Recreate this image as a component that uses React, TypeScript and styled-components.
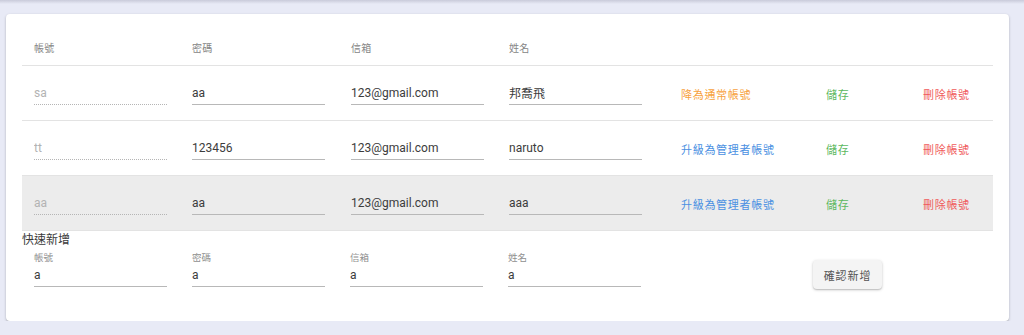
import React from 'react'
import styled, { createGlobalStyle } from 'styled-components'

const GlobalStyle = createGlobalStyle`
  html, body {
    margin: 0;
    padding: 0;
    background: #e8eaf6;
    font-family: Roboto, "Noto Sans CJK TC", sans-serif;
  }
`

const TopShade = styled.div`
  height: 4px;
  background: linear-gradient(rgba(60, 60, 90, 0.18), rgba(60, 60, 90, 0));
`

const Card = styled.div`
  width: 1003px;
  margin: 10px 0 0 6px;
  box-sizing: border-box;
  padding: 16px;
  background: #fff;
  border-radius: 4px;
  box-shadow: 0 1px 3px rgba(0, 0, 0, 0.2), 0 1px 1px rgba(0, 0, 0, 0.12);
`

const columns = '158px 159px 158px 172px 145px 97px 1fr'

const HeadRow = styled.div`
  display: grid;
  grid-template-columns: ${columns};
  height: 36px;
  box-sizing: border-box;
  align-items: center;
  border-bottom: 1px solid #e3e3e3;
`

const HeadCell = styled.div`
  padding-left: 12px;
  font-size: 10px;
  color: #858585;
  letter-spacing: 0.3px;
`

const Row = styled.div<{ $shade?: boolean }>`
  display: grid;
  grid-template-columns: ${columns};
  height: 55px;
  box-sizing: border-box;
  align-items: center;
  border-bottom: 1px solid #e3e3e3;
  background: ${p => (p.$shade ? '#ececec' : 'transparent')};
`

const Cell = styled.div`
  padding-left: 12px;
`

const Input = styled.input<{ $locked?: boolean }>`
  display: block;
  width: 133px;
  height: 22px;
  box-sizing: content-box;
  padding: 0;
  margin: 0;
  border: none;
  border-bottom: 1px ${p => (p.$locked ? 'dotted #b5b5b5' : 'solid #b8b8b8')};
  background: transparent;
  font-family: Roboto, "Noto Sans CJK TC", sans-serif;
  font-size: 12px;
  color: ${p => (p.$locked ? '#b3b3b3' : '#3c3c3c')};
  outline: none;
`

const Action = styled.span<{ $color: string }>`
  font-size: 11px;
  letter-spacing: 0.7px;
  color: ${p => p.$color};
  cursor: pointer;
`

const QuickTitle = styled.div`
  height: 18px;
  line-height: 18px;
  font-size: 12px;
  color: #3a3a3a;
`

const QuickRow = styled.div`
  display: flex;
  align-items: flex-start;
  gap: 25px;
  margin-top: 3px;
  padding: 0 0 16px 12px;
`

const Field = styled.div`
  display: flex;
  flex-direction: column;
`

const FieldLabel = styled.label`
  height: 12px;
  line-height: 12px;
  font-size: 9.5px;
  color: #8f8f8f;
`

const Button = styled.button`
  margin: 8px 0 0 147px;
  height: 29px;
  width: 69px;
  padding: 0;
  border: none;
  border-radius: 4px;
  background: #f4f4f4;
  box-shadow: 0 1px 3px rgba(0, 0, 0, 0.22), 0 1px 1px rgba(0, 0, 0, 0.1);
  font-family: Roboto, "Noto Sans CJK TC", sans-serif;
  font-size: 11px;
  letter-spacing: 0.9px;
  color: #555;
  cursor: pointer;
`

const users = [
  { account: 'sa', password: 'aa', email: '123@gmail.com', name: '邦喬飛', admin: true },
  { account: 'tt', password: '123456', email: '123@gmail.com', name: 'naruto', admin: false },
  { account: 'aa', password: 'aa', email: '123@gmail.com', name: 'aaa', admin: false },
]

const headers = ['帳號', '密碼', '信箱', '姓名']

export default function App() {
  return (
    <>
      <GlobalStyle />
      <TopShade />
      <Card>
        <HeadRow>
          {headers.map(h => <HeadCell key={h}>{h}</HeadCell>)}
        </HeadRow>
        {users.map((u, i) => (
          <Row key={u.account} $shade={i === 2}>
            <Cell><Input $locked readOnly defaultValue={u.account} /></Cell>
            <Cell><Input defaultValue={u.password} /></Cell>
            <Cell><Input defaultValue={u.email} /></Cell>
            <Cell><Input defaultValue={u.name} /></Cell>
            <Cell>
              {u.admin
                ? <Action $color="#f7a23e">降為通常帳號</Action>
                : <Action $color="#4a90e2">升級為管理者帳號</Action>}
            </Cell>
            <Cell><Action $color="#5cb860">儲存</Action></Cell>
            <Cell><Action $color="#f05a5a">刪除帳號</Action></Cell>
          </Row>
        ))}
        <QuickTitle>快速新增</QuickTitle>
        <QuickRow>
          {headers.map(h => (
            <Field key={h}>
              <FieldLabel>{h}</FieldLabel>
              <Input defaultValue="a" />
            </Field>
          ))}
          <Button>確認新增</Button>
        </QuickRow>
      </Card>
    </>
  )
}
